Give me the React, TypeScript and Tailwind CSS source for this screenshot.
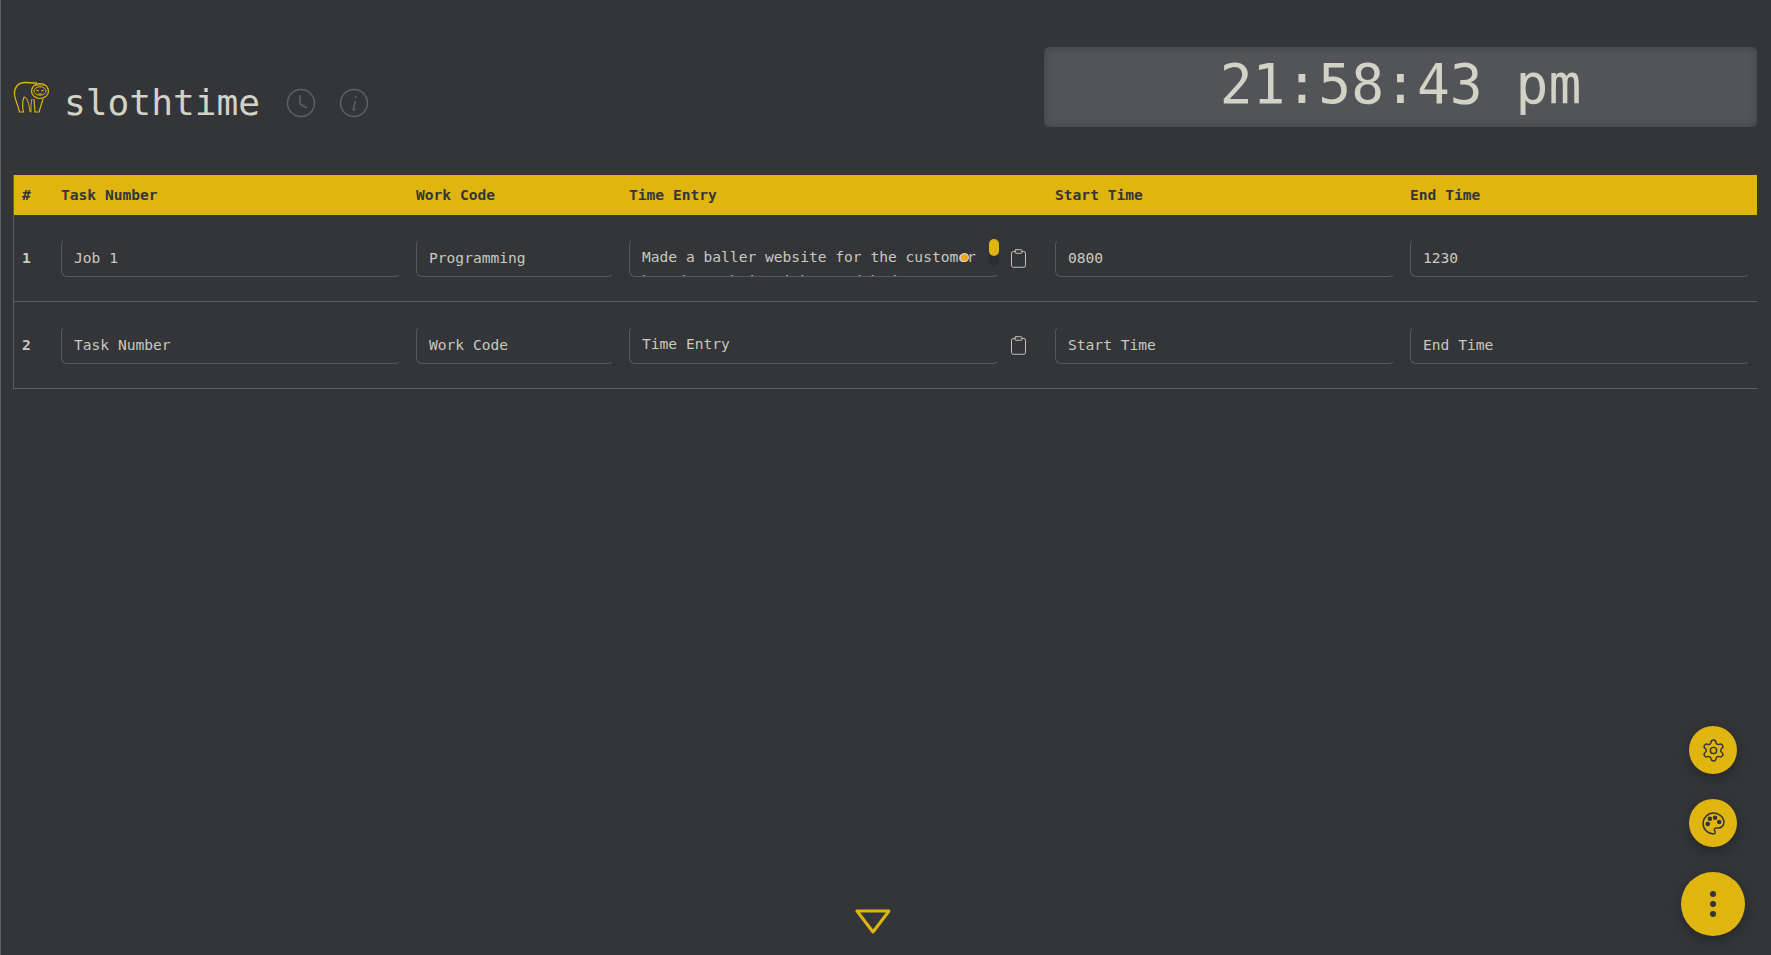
import React from "react";
import { Clipboard, Settings } from "lucide-react";

const rows = [
  { n: "1", task: "Job 1", code: "Programming", start: "0800", end: "1230", entry: "Made a baller website for the customer based on their wishes and budget" },
  { n: "2", task: "Task Number", code: "Work Code", start: "Start Time", end: "End Time", entry: "Time Entry" },
];

const Field = ({ text }: { text: string }) => (
  <div className="h-[38px] pl-[12px] flex items-center rounded-[6px] border border-[#57585c] border-t-transparent border-r-transparent text-[#c9c9bd]">
    {text}
  </div>
);

const SlothLogo = () => (
  <svg width="38" height="36" viewBox="0 0 38 36" fill="none" stroke="#dfb40f" strokeWidth="1" className="self-start mt-[2px]">
    <path d="M1.5 14C1 8 5 2.5 12 2.5c4 0 7 .5 12 .5" strokeWidth="1.3" />
    <path d="M1.5 14c0 5 3 9 5 18h4c-1-4-1-11 .5-15" strokeWidth="1.2" />
    <path d="M11 17c3 0 5 6 6 15h1c0-6 0-10 1-13" />
    <path d="M21 19l1 13h4l4-13" strokeWidth="1.2" />
    <ellipse cx="27" cy="11" rx="8.5" ry="7.5" strokeWidth="1.2" />
    <ellipse cx="27" cy="11" rx="6" ry="4.2" />
    <path d="M23 10l3 1M31 10l-3 1M25 14h4M22 5h10" />
  </svg>
);

const PaletteIcon = () => (
  <svg width="25" height="25" viewBox="0 0 24 24" fill="none" stroke="#33353a" strokeWidth="1.4">
    <circle cx="13.5" cy="6.5" r="1.5" fill="#33353a" />
    <circle cx="17.5" cy="10.5" r="1.5" fill="#33353a" />
    <circle cx="8.5" cy="7.5" r="1.5" fill="#33353a" />
    <circle cx="6.5" cy="12.5" r="1.5" fill="#33353a" />
    <path d="M12 2C6.5 2 2 6.5 2 12s4.5 10 10 10c.926 0 1.648-.746 1.648-1.688 0-.437-.18-.835-.437-1.125-.29-.289-.438-.652-.438-1.125a1.64 1.64 0 0 1 1.668-1.668h1.996c3.051 0 5.555-2.503 5.555-5.554C21.965 6.012 17.461 2 12 2z" />
  </svg>
);

const App = () => {
  return (
    <div className="relative h-[955px] overflow-hidden bg-[#333539] border-l border-[#5d5e62] font-['DejaVu_Sans_Mono',monospace] text-[14.6px] text-[#c9c9bd]">
      <div className="flex justify-between items-start pl-[12px] pr-[14px] pt-[47px]">
        <div className="flex items-center mt-[31px]">
          <SlothLogo />
          <span className="ml-[13px] text-[36.2px] leading-[50px] text-[#d2d2c6]">slothtime</span>
          <svg width="30" height="30" viewBox="0 0 30 30" fill="none" stroke="#5e6064" strokeWidth="1.5" className="ml-[26px]">
            <circle cx="15" cy="15" r="13.5" />
            <path d="M14 7v9l7 4" />
          </svg>
          <svg width="30" height="30" viewBox="0 0 30 30" fill="none" stroke="#5e6064" strokeWidth="1.5" className="ml-[23px]">
            <circle cx="15" cy="15" r="13.5" />
            <path d="M16.5 13l-2.2 8c-.2 1 .5 1.3 2 .2" />
            <circle cx="16.8" cy="9" r="1" fill="#5e6064" stroke="none" />
          </svg>
        </div>
        <div className="w-[713px] h-[80px] pb-[4px] rounded-[5px] bg-[#525458] shadow-[inset_0_0_8px_rgba(0,0,0,0.22)] flex items-center justify-center text-[54.6px] text-[#d2d2c6]">
          21:58:43 pm
        </div>
      </div>

      <div className="ml-[12px] mr-[14px] mt-[47px] border-l border-b border-[#5d5e62]">
        <table className="w-full table-fixed border-collapse text-left">
          <colgroup>
            <col className="w-[39px]" />
            <col className="w-[355px]" />
            <col className="w-[213px]" />
            <col className="w-[426px]" />
            <col className="w-[355px]" />
            <col className="w-[355px]" />
          </colgroup>
          <thead>
            <tr className="h-[40px] bg-[#e0b510] text-[#33353a] font-bold">
              <th className="pl-[8px]">#</th>
              <th className="px-[8px]">Task Number</th>
              <th className="px-[8px]">Work Code</th>
              <th className="px-[8px]">Time Entry</th>
              <th className="px-[8px]">Start Time</th>
              <th className="px-[8px]">End Time</th>
            </tr>
          </thead>
          <tbody>
            {rows.map((row, i) => (
              <tr key={row.n} className={i === 0 ? "h-[86px] border-b border-[#5d5e62]" : "h-[87px]"}>
                <td className="pl-[8px] font-bold">{row.n}</td>
                <td className="pl-[8px] pr-[7px]"><Field text={row.task} /></td>
                <td className="pl-[8px] pr-[7px]"><Field text={row.code} /></td>
                <td className="pl-[8px]">
                  <div className="flex items-center">
                    <div className="relative w-[370px] h-[38px]">
                      <div className="h-full overflow-hidden pl-[12px] pr-[10px] pt-[5px] leading-[24px] rounded-[6px] border border-[#57585c] border-t-transparent border-r-transparent text-[#c9c9bd]">
                        {row.entry}
                      </div>
                      {i === 0 && (
                        <>
                          <div className="absolute right-0 top-0 w-[10px] h-[27px] rounded-full bg-[#2d2e32]">
                            <div className="w-[10px] h-[17px] rounded-full bg-[#e0b510]" />
                          </div>
                          <div className="absolute left-[332px] top-[15px] w-[7px] h-[7px] rounded-full bg-[#f5a50f] ring-1 ring-[#d8d8d8]" />
                        </>
                      )}
                    </div>
                    <Clipboard size={21} strokeWidth={1.1} className="ml-[9px] mt-[2px] text-[#c9c9bd]" />
                  </div>
                </td>
                <td className="pl-[8px] pr-[7px]"><Field text={row.start} /></td>
                <td className="pl-[8px] pr-[7px]"><Field text={row.end} /></td>
              </tr>
            ))}
          </tbody>
        </table>
      </div>

      <svg width="36" height="25" viewBox="0 0 36 25" fill="none" stroke="#e0b510" strokeWidth="3" strokeLinejoin="round" className="absolute left-[854px] top-[909px]">
        <path d="M2 2h32L18 23z" />
      </svg>

      <button className="absolute left-[1688px] top-[726px] w-[48px] h-[48px] rounded-full bg-[#e0b510] flex items-center justify-center shadow-[0_4px_14px_rgba(0,0,0,0.3)]">
        <Settings size={25} strokeWidth={1.4} className="text-[#33353a]" />
      </button>
      <button className="absolute left-[1688px] top-[799px] w-[48px] h-[48px] rounded-full bg-[#e0b510] flex items-center justify-center shadow-[0_4px_14px_rgba(0,0,0,0.3)]">
        <PaletteIcon />
      </button>
      <button className="absolute left-[1680px] top-[872px] w-[64px] h-[64px] rounded-full bg-[#e0b510] flex flex-col gap-[4px] items-center justify-center shadow-[0_4px_14px_rgba(0,0,0,0.3)]">
        <span className="w-[6px] h-[6px] rounded-full bg-[#33353a]" />
        <span className="w-[6px] h-[6px] rounded-full bg-[#33353a]" />
        <span className="w-[6px] h-[6px] rounded-full bg-[#33353a]" />
      </button>
    </div>
  );
};

export default App;
